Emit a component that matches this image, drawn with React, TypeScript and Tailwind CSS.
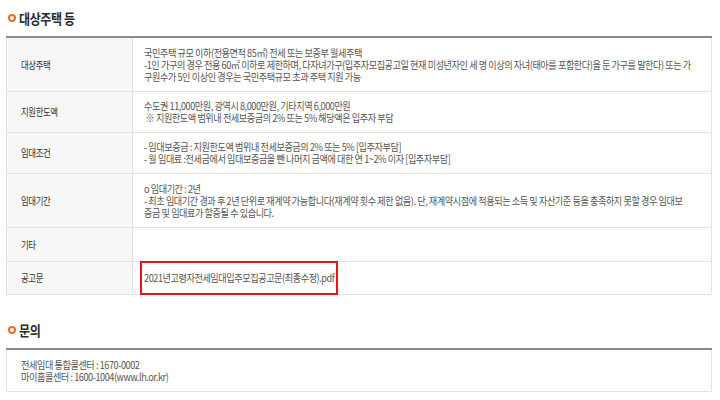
const font = { fontFamily: "'Noto Sans CJK KR', 'Noto Sans', sans-serif" };

type Row = { label: string; h: string; lines: string[] };

const rows: Row[] = [
  {
    label: "대상주택",
    h: "h-[54px]",
    lines: [
      "국민주택 규모 이하(전용면적 85㎡) 전세 또는 보증부 월세주택",
      "-1인 가구의 경우 전용 60㎡ 이하로 제한하며, 다자녀가구(입주자모집공고일 현재 미성년자인 세 명 이상의 자녀(태아를 포함한다)을 둔 가구를 말한다) 또는 가",
      "구원수가 5인 이상인 경우는 국민주택규모 초과 주택 지원 가능",
    ],
  },
  {
    label: "지원한도액",
    h: "h-[41px]",
    lines: [
      "수도권 11,000만원, 광역시 8,000만원, 기타지역 6,000만원",
      "\u00a0※ 지원한도액 범위내 전세보증금의 2% 또는 5% 해당액은 입주자 부담",
    ],
  },
  {
    label: "임대조건",
    h: "h-[41px]",
    lines: [
      "- 임대보증금 : 지원한도액 범위내 전세보증금의 2% 또는 5% [입주자부담]",
      "- 월 임대료 :전세금에서 임대보증금을 뺀 나머지 금액에 대한 연 1~2% 이자 [입주자부담]",
    ],
  },
  {
    label: "임대기간",
    h: "h-[54px]",
    lines: [
      "o 임대기간 : 2년",
      "- 최초 임대기간 경과 후 2년 단위로 재계약 가능합니다(재계약 횟수 제한 없음). 단, 재계약시점에 적용되는 소득 및 자산기준 등을 충족하지 못할 경우 임대보",
      "증금 및 임대료가 할증될 수 있습니다.",
    ],
  },
  { label: "기타", h: "h-[34px]", lines: [] },
];

// condensed body line: the source font is narrow, so squeeze Noto a bit
const lineCls =
  "origin-left scale-x-[0.87] whitespace-nowrap text-[10.5px] leading-[12px] tracking-[-0.5px] text-[#555]";
const labelCls =
  "w-[126px] shrink-0 bg-[#f7f7f7] border-r border-[#e6e3dd] flex items-center pl-[14px]";

function Label({ text }: { text: string }) {
  return (
    <div className={labelCls}>
      <span className="origin-left scale-x-[0.8] whitespace-nowrap text-[10.5px] tracking-[-0.5px] text-[#333]">
        {text}
      </span>
    </div>
  );
}

function SectionTitle({ title, className }: { title: string; className?: string }) {
  return (
    <div className={`flex items-center h-[36px] ${className ?? ""}`}>
      <span className="ml-[2px] w-[8px] h-[8px] rounded-full border-2 border-[#f26a2e]" />
      <h2 className="ml-[3px] origin-left scale-x-[0.86] whitespace-nowrap text-[14px] font-bold tracking-[-0.5px] text-[#2b2b2b] leading-none">
        {title}
      </h2>
    </div>
  );
}

export default function App() {
  return (
    <div className="w-[720px] h-[400px] bg-white overflow-hidden pl-[6px] pr-[8px]" style={font}>
      <SectionTitle title="대상주택 등" />

      {/* 대상주택 table */}
      <div className="border-t-2 border-[#8a8a8a]">
        <div className="border-x border-[#e6e3dd]">
          {rows.map((row) => (
            <div key={row.label} className={`flex border-b border-[#e6e3dd] ${row.h}`}>
              <Label text={row.label} />
              <div className="flex-1 flex flex-col justify-center pl-[11px]">
                {row.lines.map((l, i) => (
                  <div key={i} className={lineCls}>
                    {l}
                  </div>
                ))}
              </div>
            </div>
          ))}
          <div className="flex border-b border-[#e6e3dd] h-[33px]">
            <Label text="공고문" />
            <div className="flex-1 flex items-center pl-[7px]">
              <a className="flex items-center h-[34px] -mt-[1px] w-[198px] border-2 border-[#e8141a] pl-[2px]">
                <span className={lineCls}>2021년고령자전세임대입주모집공고문(최종수정).pdf</span>
              </a>
            </div>
          </div>
        </div>
      </div>

      <SectionTitle title="문의" className="mt-[16px] h-[37px]" />

      <div className="border-t-2 border-[#8a8a8a]">
        <div className="h-[42px] border-x border-b border-[#e6e3dd] flex flex-col justify-center pl-[14px]">
          <div className={lineCls}>전세임대 통합콜센터 : 1670-0002</div>
          <div className={lineCls}>마이홈콜센터 : 1600-1004(www.lh.or.kr)</div>
        </div>
      </div>
    </div>
  );
}
